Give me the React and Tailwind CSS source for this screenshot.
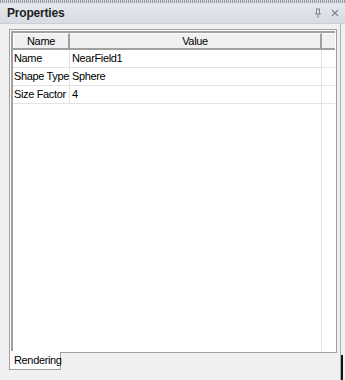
import React from "react";

const rows = [
  ["Name", "NearField1"],
  ["Shape Type", "Sphere"],
  ["Size Factor", "4"],
];

export default function App() {
  return (
    <div className="w-[345px] h-[380px] bg-[#f0f0f0] flex flex-col overflow-hidden text-[11px] tracking-[-0.35px] text-black" style={{ fontFamily: '"Liberation Sans", Arial, sans-serif' }}>
      <div className="h-[3px] bg-[repeating-linear-gradient(90deg,#8f9aa6_0_1px,#d8dde3_1px_2px)]" />
      <div className="h-[21px] bg-[linear-gradient(#e4e8ed,#d7dce2)] flex items-center pl-[7px] pr-[6px] border-b border-[#c9cfd6]">
        <span className="font-semibold text-[12px] text-[#1e1e1e] tracking-[-0.2px]">Properties</span>
        <div className="ml-auto flex items-center gap-[9px]">
          <svg width="8" height="10" viewBox="0 0 8 10">
            <path d="M2 1h4M2.5 1v5M5.5 1v5M1 6h6M4 6v4" stroke="#7b8794" strokeWidth="1" fill="none" />
          </svg>
          <svg width="8" height="8" viewBox="0 0 8 8">
            <path d="M1 1l6 6M7 1l-6 6" stroke="#7b8794" strokeWidth="1.2" fill="none" />
          </svg>
        </div>
      </div>
      <div className="flex-1 flex">
        <div className="flex-1 flex flex-col pl-[9px] pr-[3px] pt-[5px] border-r border-[#a7b4c4]">
          <div className="flex-1 border border-[#a0a0a0] bg-white p-px">
            <div className="h-full border-l-2 border-t-2 border-[#a0a0a0] bg-white flex flex-col">
              <div className="flex h-[17px] bg-[#f0f0f0] border-b-2 border-[#a0a0a0]">
                <div className="w-[57px] border-r-2 border-[#a0a0a0] flex items-center justify-center border-t border-l border-t-white border-l-white">Name</div>
                <div className="flex-1 border-r-2 border-[#a0a0a0] flex items-center justify-center border-t border-t-white">Value</div>
                <div className="w-[13px] border-t border-t-white" />
              </div>
              {rows.map(([k, v]) => (
                <div key={k} className="flex h-[18px] border-b border-[#e3e3e3]">
                  <div className="w-[57px] border-r border-[#e3e3e3] flex items-center pl-[1px] whitespace-nowrap">{k}</div>
                  <div className="flex-1 flex items-center pl-[2px] border-r border-[#e3e3e3] mr-[13px]">{v}</div>
                </div>
              ))}
              <div className="flex-1 mr-[13px] border-r border-[#e3e3e3]" />
            </div>
          </div>
          <div className="h-[27px] flex items-start">
            <div className="h-[18px] w-[52px] pl-[4px] bg-white border border-t-0 border-[#a0a0a0] flex items-center -mt-px">Rendering</div>
          </div>
        </div>
        <div className="w-[4px] flex flex-col">
          <div className="flex-1" />
          <div className="h-[25px] w-[2px] bg-[#111]" />
        </div>
      </div>
    </div>
  );
}
